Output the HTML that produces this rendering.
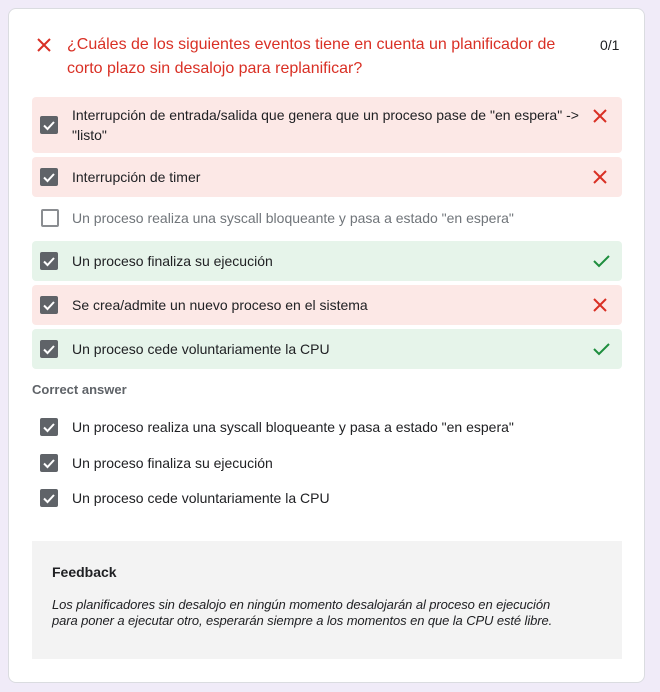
<!DOCTYPE html>
<html><head><style>
body{margin:0;width:660px;height:692px;background:#f0ebf8;font-family:"Liberation Sans",Roboto,sans-serif;overflow:hidden}
.card{position:absolute;left:8px;top:8px;width:637px;height:675px;background:#fff;border:1px solid #dadce0;border-radius:8px;box-sizing:border-box}
.abs{position:absolute}
.title{left:67px;top:33px;width:520px;color:#d93025;font-size:16px;line-height:24px}
.score{left:600px;top:37px;font-size:14px;color:#202124}
.row{position:absolute;left:32px;width:590px;border-radius:4px;font-size:14px;color:#202124;line-height:20px}
.red{background:#fce8e6}.green{background:#e6f4ea}
.cb{position:absolute;left:8px;width:18px;height:18px;background:#5f6368;border-radius:2px}
.cb svg{position:absolute;left:1px;top:1px}
.ucb{position:absolute;left:9px;width:14px;height:14px;border:2px solid #8a8d91;border-radius:2px;background:#fff}
.txt{position:absolute;left:40px;width:515px}
.ic{position:absolute;left:560px}
</style></head><body>
<div class="card"></div>
<svg class="abs" style="left:36px;top:37px" width="16" height="16" viewBox="0 0 16 16"><path d="M2 2L14 14M14 2L2 14" stroke="#d93025" stroke-width="2"/></svg>
<div class="abs title">¿Cuáles de los siguientes eventos tiene en cuenta un planificador de corto plazo sin desalojo para replanificar?</div>
<div class="abs score">0/1</div>

<div class="row red" style="top:97px;height:56px">
<div class="cb" style="top:19px"><svg width="16" height="16" viewBox="0 0 16 16"><path d="M3 8.5L6.5 12L13 5" stroke="#fff" stroke-width="2" fill="none"/></svg></div>
<div class="txt" style="top:8px">Interrupción de entrada/salida que genera que un proceso pase de "en espera" -> "listo"</div>
<svg class="ic" style="top:11px" width="16" height="16" viewBox="0 0 16 16"><path d="M2 2L14 14M14 2L2 14" stroke="#d93025" stroke-width="2"/></svg></div>

<div class="row red" style="top:157px;height:40px">
<div class="cb" style="top:11px"><svg width="16" height="16" viewBox="0 0 16 16"><path d="M3 8.5L6.5 12L13 5" stroke="#fff" stroke-width="2" fill="none"/></svg></div>
<div class="txt" style="top:10px">Interrupción de timer</div>
<svg class="ic" style="top:12px" width="16" height="16" viewBox="0 0 16 16"><path d="M2 2L14 14M14 2L2 14" stroke="#d93025" stroke-width="2"/></svg></div>

<div class="row" style="top:200px;height:36px;color:#70757a">
<div class="ucb" style="top:9px"></div>
<div class="txt" style="top:8px">Un proceso realiza una syscall bloqueante y pasa a estado "en espera"</div></div>

<div class="row green" style="top:241px;height:40px">
<div class="cb" style="top:11px"><svg width="16" height="16" viewBox="0 0 16 16"><path d="M3 8.5L6.5 12L13 5" stroke="#fff" stroke-width="2" fill="none"/></svg></div>
<div class="txt" style="top:10px">Un proceso finaliza su ejecución</div>
<svg class="ic" style="top:12px" width="20" height="16" viewBox="0 0 20 16"><path d="M2 8L7 13L17 3" stroke="#1e8e3e" stroke-width="2" fill="none"/></svg></div>

<div class="row red" style="top:285px;height:40px">
<div class="cb" style="top:11px"><svg width="16" height="16" viewBox="0 0 16 16"><path d="M3 8.5L6.5 12L13 5" stroke="#fff" stroke-width="2" fill="none"/></svg></div>
<div class="txt" style="top:10px">Se crea/admite un nuevo proceso en el sistema</div>
<svg class="ic" style="top:12px" width="16" height="16" viewBox="0 0 16 16"><path d="M2 2L14 14M14 2L2 14" stroke="#d93025" stroke-width="2"/></svg></div>

<div class="row green" style="top:329px;height:40px">
<div class="cb" style="top:11px"><svg width="16" height="16" viewBox="0 0 16 16"><path d="M3 8.5L6.5 12L13 5" stroke="#fff" stroke-width="2" fill="none"/></svg></div>
<div class="txt" style="top:10px">Un proceso cede voluntariamente la CPU</div>
<svg class="ic" style="top:12px" width="20" height="16" viewBox="0 0 20 16"><path d="M2 8L7 13L17 3" stroke="#1e8e3e" stroke-width="2" fill="none"/></svg></div>

<div class="abs" style="left:32px;top:382px;font-size:13px;color:#5f6368;font-weight:bold">Correct answer</div>

<div class="row" style="top:417px;height:20px">
<div class="cb" style="top:1px"><svg width="16" height="16" viewBox="0 0 16 16"><path d="M3 8.5L6.5 12L13 5" stroke="#fff" stroke-width="2" fill="none"/></svg></div>
<div class="txt" style="top:0">Un proceso realiza una syscall bloqueante y pasa a estado "en espera"</div></div>
<div class="row" style="top:453px;height:20px">
<div class="cb" style="top:1px"><svg width="16" height="16" viewBox="0 0 16 16"><path d="M3 8.5L6.5 12L13 5" stroke="#fff" stroke-width="2" fill="none"/></svg></div>
<div class="txt" style="top:0">Un proceso finaliza su ejecución</div></div>
<div class="row" style="top:488px;height:20px">
<div class="cb" style="top:1px"><svg width="16" height="16" viewBox="0 0 16 16"><path d="M3 8.5L6.5 12L13 5" stroke="#fff" stroke-width="2" fill="none"/></svg></div>
<div class="txt" style="top:0">Un proceso cede voluntariamente la CPU</div></div>

<div class="abs" style="left:32px;top:541px;width:590px;height:118px;background:#f3f3f3">
<div class="abs" style="left:20px;top:23px;font-size:14px;font-weight:bold;color:#202124">Feedback</div>
<div class="abs" style="left:20px;top:56px;width:540px;font-size:13px;line-height:16px;font-style:italic;color:#202124;letter-spacing:-0.1px">Los planificadores sin desalojo en ningún momento desalojarán al proceso en ejecución<br>para poner a ejecutar otro, esperarán siempre a los momentos en que la CPU esté libre.</div>
</div>
</body></html>
